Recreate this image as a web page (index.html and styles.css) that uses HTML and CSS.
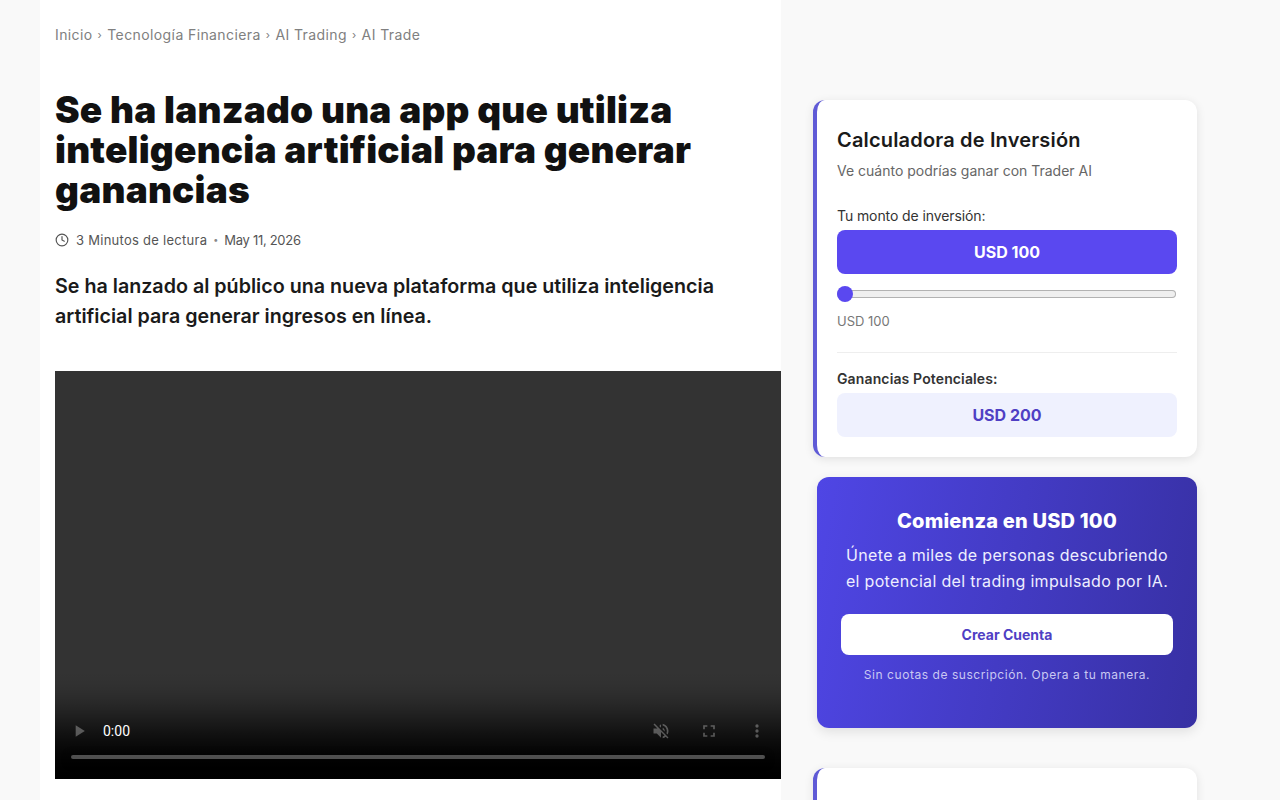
FILE: index.html
```html
<!DOCTYPE html>
<html lang="es">
<head>
  <meta charset="UTF-8" />
  <meta name="viewport" content="width=device-width, initial-scale=1.0" />
  <title>AI Trade</title>
  <link rel="stylesheet" href="styles.css">
</head>
<body>
  <div class="page">
    <main class="article">
      <nav class="breadcrumb">
        <a href="#">Inicio</a><span class="sep">›</span>
        <a href="#">Tecnología Financiera</a><span class="sep">›</span>
        <a href="#">AI Trading</a><span class="sep">›</span>
        <a href="#">AI Trade</a>
      </nav>

      <h1>Se ha lanzado una app que utiliza inteligencia artificial para generar ganancias</h1>

      <div class="meta">
        <svg class="clock" viewBox="0 0 24 24" width="14" height="14" fill="none" stroke="currentColor" stroke-width="2" stroke-linecap="round" stroke-linejoin="round"><circle cx="12" cy="12" r="10"/><path d="M12 6v6l4 2"/></svg>
        <span class="read-time">3 Minutos de lectura</span>
        <span class="dot">•</span>
        <span class="date">May 11, 2026</span>
      </div>

      <p class="lead">Se ha lanzado al público una nueva plataforma que utiliza inteligencia artificial para generar ingresos en línea.</p>

      <video class="player" controls muted></video>
    </main>

    <aside class="sidebar">
      <section class="card calc">
        <h3>Calculadora de Inversión</h3>
        <p class="calc-sub">Ve cuánto podrías ganar con Trader AI</p>
        <label class="calc-label" for="amount">Tu monto de inversión:</label>
        <div class="amount-box">USD 100</div>
        <input class="slider" id="amount" type="range" min="100" max="10000" value="100">
        <div class="slider-value">USD 100</div>
        <hr class="divider">
        <div class="gain-label">Ganancias Potenciales:</div>
        <div class="gain-box">USD 200</div>
      </section>

      <section class="cta">
        <h3>Comienza en USD 100</h3>
        <p class="cta-text">Únete a miles de personas descubriendo el potencial del trading impulsado por IA.</p>
        <a class="cta-btn" href="#">Crear Cuenta</a>
        <p class="cta-note">Sin cuotas de suscripción. Opera a tu manera.</p>
      </section>

      <section class="card next"></section>
    </aside>
  </div>
</body>
</html>
```

FILE: styles.css
```css
:root {
  --bg-color: #f9f9f9;
  --primary-color: #5a48f0;
  --accent-color: #5f5ad6;
  --deep-color: #4f3fc4;
  --heading-font: 'Inter', 'Liberation Sans', sans-serif;
}

html, body {
  height: 800px;
  overflow: hidden;
}

body {
  margin: 0;
  font-family: 'Inter', 'Liberation Sans', sans-serif;
  background-color: var(--bg-color);
  color: #111;
}

.page {
  display: flex;
  align-items: flex-start;
  width: 1200px;
  margin: 0 auto;
}

.article {
  width: 741px;
  padding: 25px 0 0 15px;
  box-sizing: border-box;
  min-height: 800px;
  background: #fff;
}

.breadcrumb {
  display: flex;
  align-items: center;
  font-family: var(--heading-font);
  font-size: 14px;
  line-height: 20px;
  letter-spacing: 0.4px;
  color: #808080;
}

.breadcrumb a {
  color: #808080;
  text-decoration: none;
}

.breadcrumb .sep {
  margin: 0 5px;
  font-size: 11px;
}

h1 {
  width: 680px;
  margin: 45px 0 0;
  font-family: var(--heading-font);
  font-size: 37px;
  line-height: 40px;
  letter-spacing: 0.19px;
  font-weight: 900;
  color: #111;
}

.meta {
  display: flex;
  align-items: center;
  margin-top: 20px;
  font-family: var(--heading-font);
  font-size: 13px;
  line-height: 20px;
  color: #555;
}

.clock {
  margin-right: 7px;
}

.read-time {
  letter-spacing: 0.27px;
}

.date {
  letter-spacing: -0.3px;
}

.dot {
  margin: 0 6px;
  font-size: 9px;
  color: #888;
}

.lead {
  width: 680px;
  margin: 21px 0 0;
  font-size: 19.7px;
  line-height: 30px;
  font-weight: 600;
  color: #1a1a1a;
}

.player {
  display: block;
  width: 726px;
  height: 408px;
  margin-top: 40px;
  background: #333;
}

.sidebar {
  width: 384px;
  margin-left: 32px;
  padding-top: 100px;
}

.card {
  box-sizing: border-box;
  background: #fff;
  border-left: 4px solid var(--accent-color);
  border-radius: 12px;
  box-shadow: 0 2px 10px rgba(0, 0, 0, 0.1);
}

.calc {
  padding: 28px 20px 20px;
  height: 357px;
}

.calc h3 {
  margin: 0;
  font-size: 20px;
  line-height: 24px;
  letter-spacing: 0.17px;
  font-weight: 600;
  color: #1a1a1a;
}

.calc-sub {
  margin: 9px 0 0;
  font-size: 14px;
  line-height: 20px;
  color: #666;
}

.calc-label {
  display: block;
  margin-top: 25px;
  font-size: 14px;
  line-height: 20px;
  letter-spacing: -0.1px;
  color: #333;
}

.amount-box {
  margin-top: 4px;
  height: 44px;
  line-height: 44px;
  text-align: center;
  font-size: 16px;
  font-weight: 700;
  color: #fff;
  background: var(--primary-color);
  border-radius: 8px;
}

.slider {
  display: block;
  width: 339px;
  height: 16px;
  margin: 12px 0 0;
  -webkit-appearance: none;
  appearance: none;
  background: transparent;
}

.slider::-webkit-slider-runnable-track {
  height: 8px;
  background: #efefef;
  box-shadow: inset 0 0 0 1px #b2b2b2;
  border-radius: 4px;
}

.slider::-webkit-slider-thumb {
  -webkit-appearance: none;
  width: 16px;
  height: 16px;
  margin-top: -4px;
  border-radius: 50%;
  background: var(--primary-color);
}

.slider-value {
  margin-top: 9px;
  font-size: 13px;
  line-height: 20px;
  color: #777;
}

.divider {
  height: 1px;
  margin: 21px 0 0;
  border: none;
  background: #eee;
}

.gain-label {
  margin-top: 16px;
  font-size: 14px;
  line-height: 20px;
  letter-spacing: 0.13px;
  font-weight: 600;
  color: #333;
}

.gain-box {
  margin-top: 4px;
  height: 44px;
  line-height: 44px;
  text-align: center;
  font-size: 16px;
  font-weight: 700;
  color: var(--deep-color);
  background: #eff1fe;
  border-radius: 8px;
}

.cta {
  box-sizing: border-box;
  height: 251px;
  margin: 20px 0 0 4px;
  padding: 30px 24px 0;
  text-align: center;
  color: #fff;
  background: linear-gradient(100deg, #4f46e5, #3730a3);
  border-radius: 12px;
  box-shadow: 0 4px 12px rgba(0, 0, 0, 0.1);
}

.cta h3 {
  margin: 0;
  font-family: var(--heading-font);
  font-size: 20px;
  line-height: 28px;
  letter-spacing: 0.2px;
  font-weight: 800;
}

.cta-text {
  margin: 7px 0 0;
  font-family: var(--heading-font);
  font-size: 16px;
  line-height: 26px;
  letter-spacing: 0.32px;
  color: #eef;
}

.cta-btn {
  display: block;
  height: 41px;
  line-height: 41px;
  margin-top: 20px;
  font-size: 14px;
  font-weight: 700;
  color: var(--deep-color);
  text-decoration: none;
  background: #fff;
  border-radius: 8px;
}

.cta-note {
  margin: 10px 0 0;
  font-family: var(--heading-font);
  font-size: 12px;
  line-height: 20px;
  letter-spacing: 0.55px;
  color: #c9c8f2;
}

.next {
  height: 200px;
  margin-top: 40px;
}
```
